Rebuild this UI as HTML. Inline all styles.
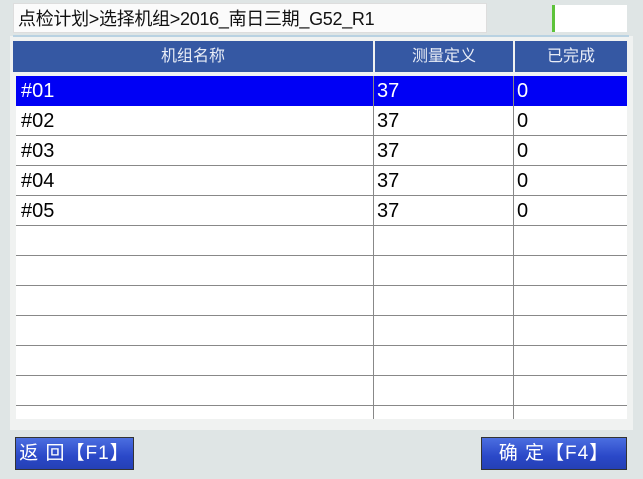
<!DOCTYPE html>
<html><head><style>
body{margin:0;width:643px;height:479px;background:#dfe5e5;position:relative;overflow:hidden;font-family:"Liberation Sans","Noto Sans CJK SC",sans-serif}
.abs{position:absolute}
#title{left:13px;top:3px;width:474px;height:30px;background:#fbfbfb;border:1px solid #ddd;box-sizing:border-box;font-size:18px;line-height:30px;padding-left:4px;color:#111;letter-spacing:-0.3px}
#rbox{left:552px;top:5px;width:75px;height:27px;background:#fff;border-left:3px solid #5dc33a;box-sizing:border-box}
#panel{left:10px;top:36px;width:623px;height:394px;background:#f0f2f1}
#sep{left:13px;top:35px;width:616px;height:2px;background:#b9d2e2}
.h{top:41px;height:31px;background:#3558a3;color:#e8ecf6;font-size:16px;line-height:31px;text-align:center}
#tbl{left:16px;top:76px;width:611px;height:343px;background:#fff;overflow:hidden}
.row{position:absolute;left:0;width:611px;height:30px;border-bottom:1px solid #888;box-sizing:border-box;font-size:20px;line-height:30px;color:#000}
.row span{position:absolute;top:0}
.vl{position:absolute;top:0;width:1px;height:343px;background:#888}
.btn{top:437px;height:33px;background:linear-gradient(#4b6ee0,#2a48c8 60%,#2540b5);border:1px solid #333;box-sizing:border-box;color:#fff;font-size:19px;line-height:31px;text-align:center;letter-spacing:1px}
</style></head><body>
<div class="abs" id="panel"></div>
<div class="abs" id="title">点检计划&gt;选择机组&gt;2016_南日三期_G52_R1</div>
<div class="abs" id="rbox"></div>
<div class="abs" id="sep"></div>
<div class="abs h" style="left:13px;width:360px">机组名称</div>
<div class="abs h" style="left:375px;width:138px">测量定义</div>
<div class="abs h" style="left:515px;width:112px">已完成</div>
<div class="abs" id="tbl">
<div class="row" style="top:0;background:#0000f5;color:#fff;border-bottom:none"><span style="left:5px">#01</span><span style="left:361px">37</span><span style="left:501px">0</span></div>
<div class="row" style="top:30px"><span style="left:5px">#02</span><span style="left:361px">37</span><span style="left:501px">0</span></div>
<div class="row" style="top:60px"><span style="left:5px">#03</span><span style="left:361px">37</span><span style="left:501px">0</span></div>
<div class="row" style="top:90px"><span style="left:5px">#04</span><span style="left:361px">37</span><span style="left:501px">0</span></div>
<div class="row" style="top:120px"><span style="left:5px">#05</span><span style="left:361px">37</span><span style="left:501px">0</span></div>
<div class="row" style="top:150px"></div><div class="row" style="top:180px"></div><div class="row" style="top:210px"></div><div class="row" style="top:240px"></div><div class="row" style="top:270px"></div><div class="row" style="top:300px"></div>
<div class="vl" style="left:357px"></div><div class="vl" style="left:497px"></div>
</div>
<div class="abs btn" style="left:15px;width:119px">返 回【F1】</div>
<div class="abs btn" style="left:481px;width:146px">确 定【F4】</div>
</body></html>
